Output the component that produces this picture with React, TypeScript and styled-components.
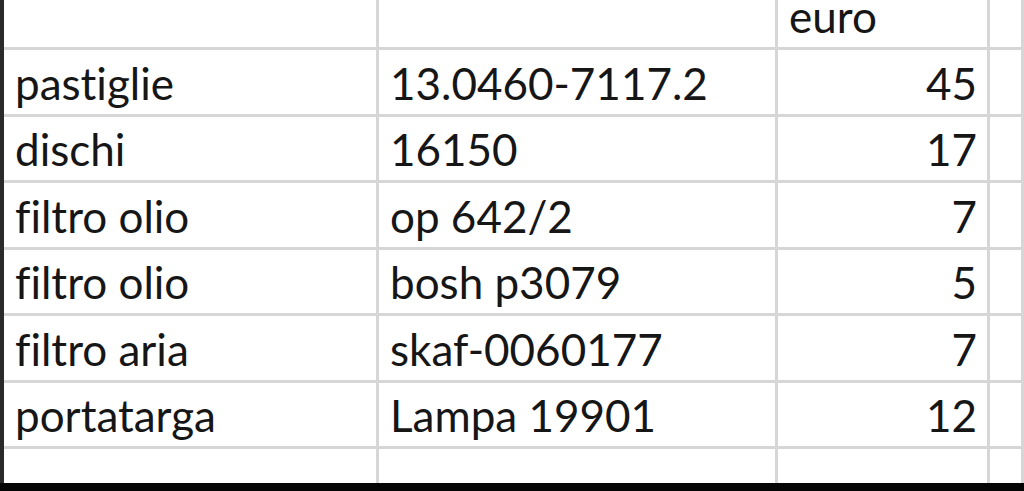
import React from "react";
import styled, { createGlobalStyle } from "styled-components";

const Global = createGlobalStyle`
  html, body { margin: 0; padding: 0; background: #ffffff; }
  body { overflow: hidden; }
`;

const Page = styled.div`
  width: 1024px;
  height: 491px;
  display: flex;
  flex-direction: column;
  overflow: hidden;
  background: #fff;
`;

const Sheet = styled.div`
  flex: 1;
  display: flex;
  flex-direction: column;
  border-left: 4px solid #2a2a2a;
  overflow: hidden;
`;

const Row = styled.div<{ $h: number }>`
  display: grid;
  grid-template-columns: 375px 399px 212px 1fr;
  height: ${(p) => p.$h}px;
  flex: none;
`;

const Cell = styled.div<{ $align?: "left" | "right" }>`
  display: flex;
  align-items: flex-end;
  justify-content: ${(p) => (p.$align === "right" ? "flex-end" : "flex-start")};
  padding: 0 ${(p) => (p.$align === "right" ? "10px" : "0")} 17px
    ${(p) => (p.$align === "right" ? "0" : "11px")};
  border-right: 3px solid #d6d6d6;
  border-bottom: 3px solid #d6d6d6;
  font-family: Lato, "Open Sans", sans-serif;
  font-size: 44px;
  line-height: 28px;
  font-variant-ligatures: none;
  font-feature-settings: "liga" 0, "clig" 0;
  color: #161616;
  white-space: nowrap;
`;

const Footer = styled.div`
  height: 8px;
  flex: none;
  background: #050505;
`;

type R = { a: string; b: string; c: string };

const rows: R[] = [
  { a: "pastiglie", b: "13.0460-7117.2", c: "45" },
  { a: "dischi", b: "16150", c: "17" },
  { a: "filtro olio", b: "op 642/2", c: "7" },
  { a: "filtro olio", b: "bosh p3079", c: "5" },
  { a: "filtro aria", b: "skaf-0060177", c: "7" },
  { a: "portatarga", b: "Lampa 19901", c: "12" },
];

export default function App() {
  return (
    <Page>
      <Global />
      <Sheet>
        <Row $h={50}>
          <Cell />
          <Cell />
          <Cell>euro</Cell>
          <Cell />
        </Row>
        {rows.map((r, i) => (
          <Row key={i} $h={i % 2 === 0 ? 67 : 66}>
            <Cell>{r.a}</Cell>
            <Cell>{r.b}</Cell>
            <Cell $align="right">{r.c}</Cell>
            <Cell />
          </Row>
        ))}
        <Row $h={66}>
          <Cell />
          <Cell />
          <Cell />
          <Cell />
        </Row>
      </Sheet>
      <Footer />
    </Page>
  );
}
